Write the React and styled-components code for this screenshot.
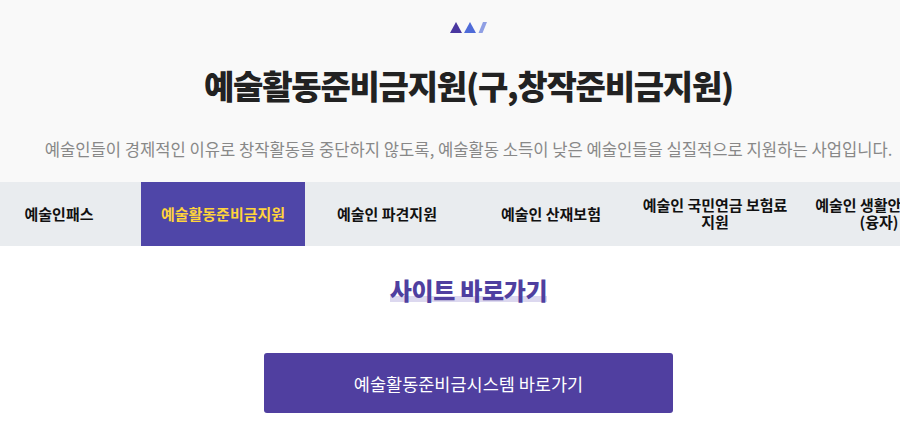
import React from "react";
import styled, { createGlobalStyle } from "styled-components";

const Global = createGlobalStyle`
  html, body { margin: 0; padding: 0; background: #fff; overflow: hidden; }
  body { font-family: "Noto Sans CJK KR", "Noto Sans", sans-serif; }
  * { box-sizing: border-box; }
`;

const Page = styled.div`
  width: 937px;
  height: 424px;
  overflow: hidden;
`;

const Head = styled.header`
  height: 182px;
  background: #f9f9f9;
  padding-top: 22px;
  display: flex;
  flex-direction: column;
  align-items: center;
`;

const Mark = styled.svg`
  display: block;
  width: 37px;
  height: 11px;
`;

const Title = styled.h1`
  margin: 29px 0 0;
  font-size: 33px;
  line-height: 46px;
  font-weight: 900;
  letter-spacing: -1.25px;
  color: #222;
  white-space: nowrap;
`;

const Desc = styled.p`
  margin: 29px 0 0;
  font-size: 16.6px;
  line-height: 24px;
  font-weight: 400;
  color: #888;
  white-space: nowrap;
`;

const Tabs = styled.nav`
  display: flex;
  height: 64px;
  margin-left: -23px;
  width: 984px;
  background: #e9ecef;
`;

const Tab = styled.a`
  flex: 0 0 164px;
  display: flex;
  align-items: center;
  justify-content: center;
  text-align: center;
  padding: 0 8px 2px;
  font-size: 15px;
  line-height: 17px;
  font-weight: 700;
  letter-spacing: -0.02px;
  color: ${(p) => (p.$active ? "#ffd43b" : "#111")};
  background: ${(p) => (p.$active ? "#4f46a8" : "transparent")};
`;

const Links = styled.section`
  display: flex;
  flex-direction: column;
  align-items: center;
  padding-top: 28px;
`;

const SubTitle = styled.h2`
  margin: 0;
  font-size: 24px;
  line-height: 32px;
  font-weight: 900;
  letter-spacing: -0.3px;
  color: #4f3fa0;
  background: linear-gradient(#dcd8ef, #dcd8ef) no-repeat 0 22px / 100% 6px;
`;

const GoButton = styled.a`
  margin-top: 47px;
  width: 409px;
  height: 60px;
  display: flex;
  align-items: center;
  justify-content: center;
  background: #503fa0;
  border-radius: 3px;
  color: #fff;
  font-size: 17.5px;
  font-weight: 400;
`;

const tabs = [
  "예술인패스",
  "예술활동준비금지원",
  "예술인 파견지원",
  "예술인 산재보험",
  "예술인 국민연금 보험료 지원",
  "예술인 생활안정자금 (융자)",
];

export default function App() {
  return (
    <Page>
      <Global />
      <Head>
        <Mark viewBox="0 0 37 11">
          <polygon points="0,11 6,0 12,11" fill="#4a37a0" />
          <polygon points="14,11 20,0 26,11" fill="#4f6bd8" />
          <polygon points="28.5,11 33,0 37,0 32.5,11" fill="#8f9fe4" />
        </Mark>
        <Title>예술활동준비금지원(구,창작준비금지원)</Title>
        <Desc>예술인들이 경제적인 이유로 창작활동을 중단하지 않도록, 예술활동 소득이 낮은 예술인들을 실질적으로 지원하는 사업입니다.</Desc>
      </Head>
      <Tabs>
        {tabs.map((t, i) => (
          <Tab key={t} $active={i === 1}>{t}</Tab>
        ))}
      </Tabs>
      <Links>
        <SubTitle>사이트 바로가기</SubTitle>
        <GoButton>예술활동준비금시스템 바로가기</GoButton>
      </Links>
    </Page>
  );
}
